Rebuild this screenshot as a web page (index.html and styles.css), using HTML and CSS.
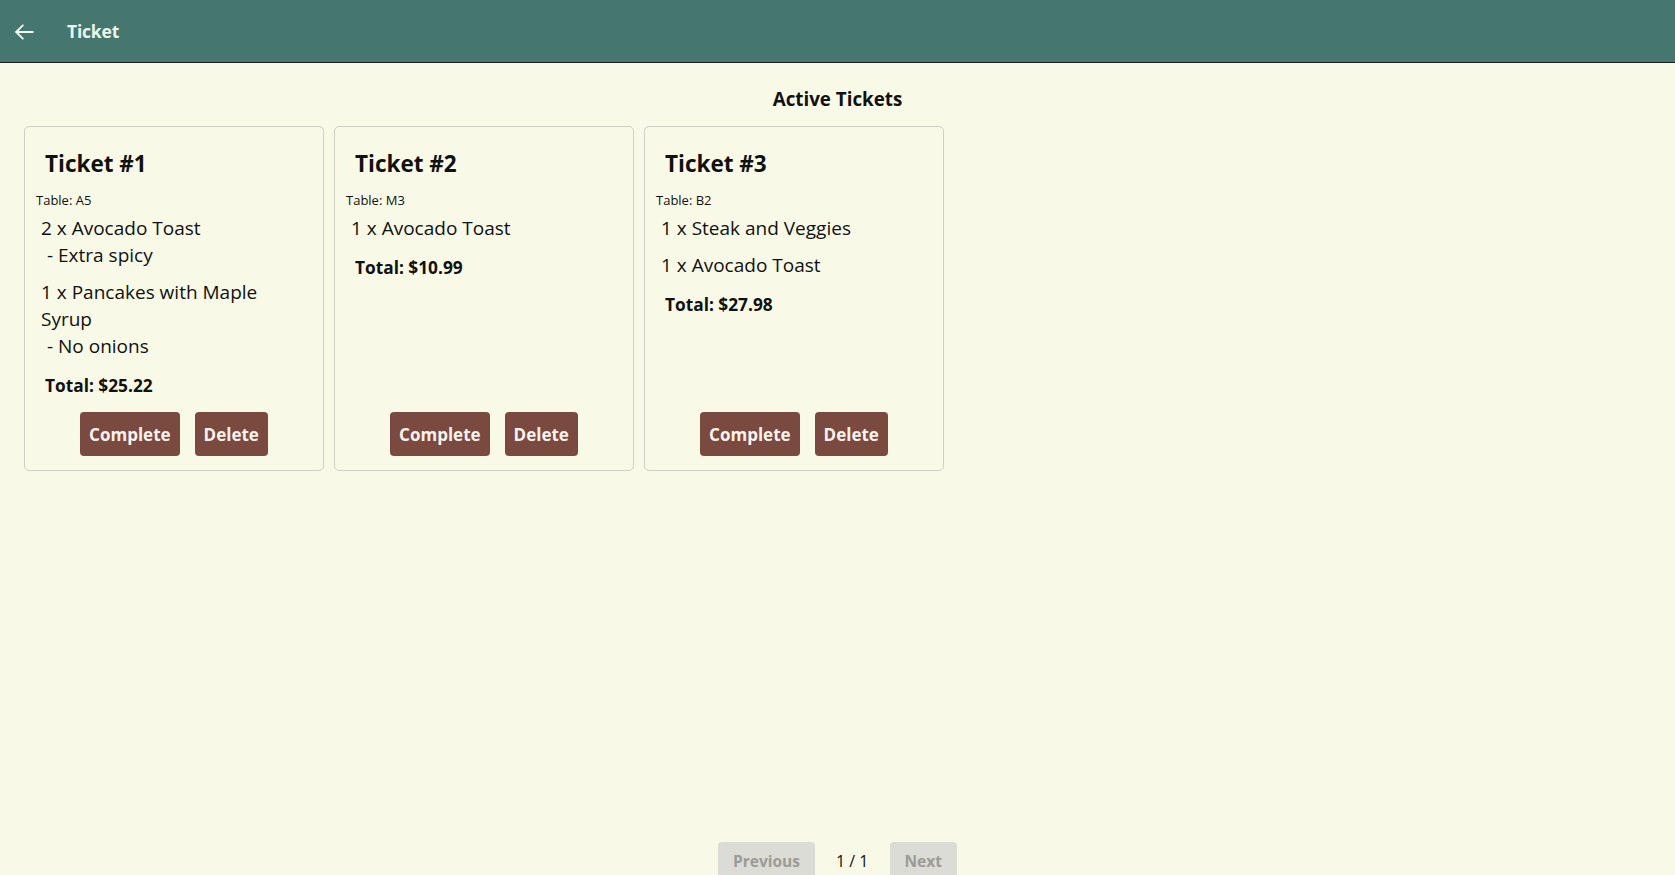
FILE: index.html
```html
<!DOCTYPE html>
<html lang="en">
<head>
<meta charset="utf-8">
<title>Ticket</title>
<link rel="stylesheet" href="styles.css">
</head>
<body>
<div class="app">
  <header class="topbar">
    <button class="back" aria-label="Back">
      <svg width="19" height="16" viewBox="0 0 19 16" fill="none" stroke="currentColor" stroke-width="1.8" stroke-linecap="round" stroke-linejoin="round">
        <path d="M17.8 8H1.2"/>
        <path d="M7.8 1.3L1.2 8L7.8 14.7"/>
      </svg>
    </button>
    <h1 class="topbar-title">Ticket</h1>
  </header>
  <main class="main">
    <h2 class="section-title">Active Tickets</h2>
    <div class="tickets">
      <article class="ticket">
        <h3 class="ticket-title">Ticket #1</h3>
        <div class="ticket-table">Table: A5</div>
        <div class="item">
          <div class="item-name">2 x Avocado Toast</div>
          <div class="item-note">- Extra spicy</div>
        </div>
        <div class="item">
          <div class="item-name">1 x Pancakes with Maple Syrup</div>
          <div class="item-note">- No onions</div>
        </div>
        <div class="ticket-total">Total: $25.22</div>
        <div class="actions">
          <button class="btn">Complete</button>
          <button class="btn">Delete</button>
        </div>
      </article>
      <article class="ticket">
        <h3 class="ticket-title">Ticket #2</h3>
        <div class="ticket-table">Table: M3</div>
        <div class="item">
          <div class="item-name">1 x Avocado Toast</div>
        </div>
        <div class="ticket-total">Total: $10.99</div>
        <div class="actions">
          <button class="btn">Complete</button>
          <button class="btn">Delete</button>
        </div>
      </article>
      <article class="ticket">
        <h3 class="ticket-title">Ticket #3</h3>
        <div class="ticket-table">Table: B2</div>
        <div class="item">
          <div class="item-name">1 x Steak and Veggies</div>
        </div>
        <div class="item">
          <div class="item-name">1 x Avocado Toast</div>
        </div>
        <div class="ticket-total">Total: $27.98</div>
        <div class="actions">
          <button class="btn">Complete</button>
          <button class="btn">Delete</button>
        </div>
      </article>
    </div>
  </main>
  <nav class="pager">
    <button class="pager-btn" disabled>Previous</button>
    <span class="pager-info">1 / 1</span>
    <button class="pager-btn" disabled>Next</button>
  </nav>
</div>
</body>
</html>
```

FILE: styles.css
```css
* { box-sizing: border-box; }
html, body {
  margin: 0;
  padding: 0;
  background: #f8f9e6;
  font-family: "Open Sans", "Noto Sans", sans-serif;
  color: #111;
}
.app {
  display: flex;
  flex-direction: column;
}
.topbar {
  height: 63px;
  background: #45776f;
  border-bottom: 1px solid #1c1c1c;
  display: flex;
  align-items: center;
  padding-left: 15px;
  color: #eaf6ec;
}
.back {
  background: none;
  border: 0;
  padding: 0;
  color: #f2f8f2;
  display: flex;
  margin: 2px 33px 0 0;
  cursor: pointer;
}
.topbar-title {
  margin: 0;
  font-size: 17.5px;
  font-weight: 700;
  letter-spacing: -0.2px;
}
.main {
  min-height: calc(100vh - 96px);
  padding: 23px 24px 0;
}
.section-title {
  margin: 0 0 14px;
  text-align: center;
  font-size: 18.8px;
  line-height: 26px;
  font-weight: 700;
}
.tickets {
  display: flex;
  flex-wrap: wrap;
  gap: 10px;
  align-items: stretch;
}
.ticket {
  width: 300px;
  border: 1px solid #cfcfc6;
  border-radius: 5px;
  padding: 22px 11px 14px;
  display: flex;
  flex-direction: column;
}
.ticket-title {
  margin: 0 0 13px 9px;
  font-size: 22.5px;
  line-height: 30px;
  font-weight: 700;
}
.ticket-table {
  font-size: 13px;
  line-height: 16px;
  margin-bottom: 7px;
}
.item {
  padding: 0 6px 0 5px;
  margin-bottom: 10px;
  font-size: 19px;
  line-height: 27px;
}
.item-note {
  padding-left: 6px;
}
.ticket-total {
  margin: 4px 0 14px 9px;
  font-size: 17.3px;
  line-height: 24px;
  font-weight: 700;
}
.actions {
  margin-top: auto;
  display: flex;
  justify-content: center;
  gap: 15px;
}
.btn {
  height: 44px;
  padding: 0 9px;
  background: #7a4940;
  color: #fbf3ee;
  border: 0;
  border-radius: 4px;
  font-family: inherit;
  font-size: 17px;
  font-weight: 700;
  cursor: pointer;
}
.pager {
  display: flex;
  justify-content: center;
  align-items: center;
  gap: 21px;
  padding-bottom: 10px;
}
.pager-btn {
  height: 38px;
  padding: 0 15px;
  background: #dcdcd6;
  color: #9b9b98;
  border: 0;
  border-radius: 4px;
  font-family: inherit;
  font-size: 15.5px;
  font-weight: 700;
}
.pager-info {
  font-size: 16px;
}
```
